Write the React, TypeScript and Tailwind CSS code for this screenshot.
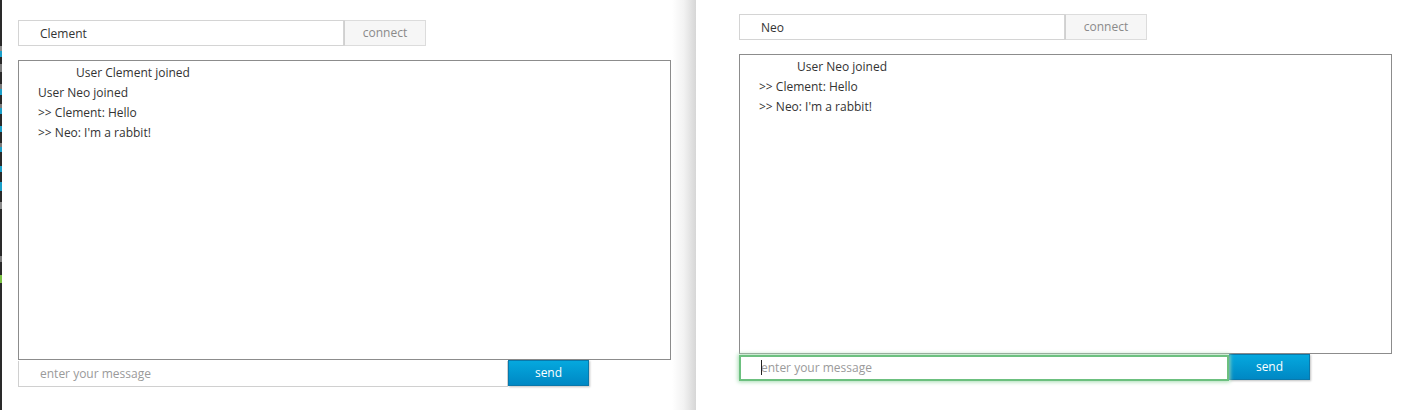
import React from 'react';

type PaneProps = {
    name: string;
    lines: string[];
    focused?: boolean;
};

function ChatPane({ name, lines, focused }: PaneProps) {
    return (
        <div className="flex flex-col">
            {/* name + connect */}
            <div className="flex">
                <input
                    readOnly
                    value={name}
                    className="w-[326px] h-[26px] border border-[#d4d4d4] bg-white pl-[21px] text-[12px] text-[#333] outline-none"
                />
                <button className="w-[82px] h-[26px] border border-[#dcdcdc] border-l-[#d0d0d0] bg-[#f6f6f6] text-[12px] text-[#8a8a8a]">
                    connect
                </button>
            </div>

            {/* messages */}
            <div className="mt-[14px] w-[653px] h-[300px] border border-[#8c8c8c] bg-white pt-[2px] pl-[19px] text-[12px] leading-5 text-[#333]">
                {lines.map((line, idx) => (
                    <div key={idx} className={idx === 0 ? 'pl-[38px]' : ''}>
                        {line}
                    </div>
                ))}
            </div>

            {/* message + send */}
            <div className="flex">
                <div className="relative">
                    <input
                        placeholder="enter your message"
                        className={`w-[490px] h-[26px] bg-white text-[12px] text-[#333] outline-none placeholder:text-[#9a9a9a] ${
                            focused
                                ? 'border-2 border-[#6cc07f] pl-[20px] shadow-[0_0_4px_1px_#a6dcb3]'
                                : 'border border-[#d0d0d0] border-t-0 pl-[21px]'
                        }`}
                    />
                    {focused && <span className="absolute left-[22px] top-[6px] w-px h-[15px] bg-[#222]" />}
                </div>
                <button className="w-[81px] h-[26px] border border-[#0a78aa] bg-gradient-to-b from-[#05a8de] to-[#0088c4] text-[12px] text-white shadow-[1px_1px_2px_rgba(0,0,0,0.25)]">
                    send
                </button>
            </div>
        </div>
    );
}

export default function App() {
    return (
        <div className="flex w-[1418px] h-[410px] overflow-hidden bg-white font-['Open_Sans',sans-serif]">
            {/* left window */}
            <div className="flex w-[696px] h-full bg-[linear-gradient(to_right,#ffffff_672px,#f2f2f2_684px,#d6d6d6_696px)]">
                <div className="flex flex-col w-[2px] h-full bg-[#2a2a2a]">
                    <div className="h-[46px]" />
                    <div className="h-[5px] bg-[#8a8a8a]" />
                    <div className="h-[6px] bg-[#1a9fc9]" />
                    <div className="h-[7px]" />
                    <div className="h-[8px] bg-[#7a7a7a]" />
                    <div className="h-[12px]" />
                    <div className="h-[5px] bg-[#7a7a7a]" />
                    <div className="h-[6px] bg-[#1a9fc9]" />
                    <div className="h-[9px]" />
                    <div className="h-[4px] bg-[#7a7a7a]" />
                    <div className="h-[6px] bg-[#1a9fc9]" />
                    <div className="h-[12px]" />
                    <div className="h-[6px] bg-[#1a9fc9]" />
                    <div className="h-[11px]" />
                    <div className="h-[4px] bg-[#7a7a7a]" />
                    <div className="h-[5px] bg-[#1a9fc9]" />
                    <div className="h-[14px]" />
                    <div className="h-[6px] bg-[#1a9fc9]" />
                    <div className="h-[10px]" />
                    <div className="h-[9px] bg-[#1a9fc9]" />
                    <div className="h-[11px]" />
                    <div className="h-[7px] bg-[#8a8a8a]" />
                    <div className="h-[47px]" />
                    <div className="h-[6px] bg-[#7a7a7a]" />
                    <div className="h-[13px]" />
                    <div className="h-[8px] bg-[#7ac143]" />
                </div>
                <div className="pl-4 pt-5">
                    <ChatPane
                        name="Clement"
                        lines={['User Clement joined', 'User Neo joined', '>> Clement: Hello', ">> Neo: I'm a rabbit!"]}
                    />
                </div>
            </div>

            {/* right window */}
            <div className="flex-1 pl-[43px] pt-[14px]">
                <ChatPane
                    name="Neo"
                    lines={['User Neo joined', '>> Clement: Hello', ">> Neo: I'm a rabbit!"]}
                    focused
                />
            </div>
        </div>
    );
}
